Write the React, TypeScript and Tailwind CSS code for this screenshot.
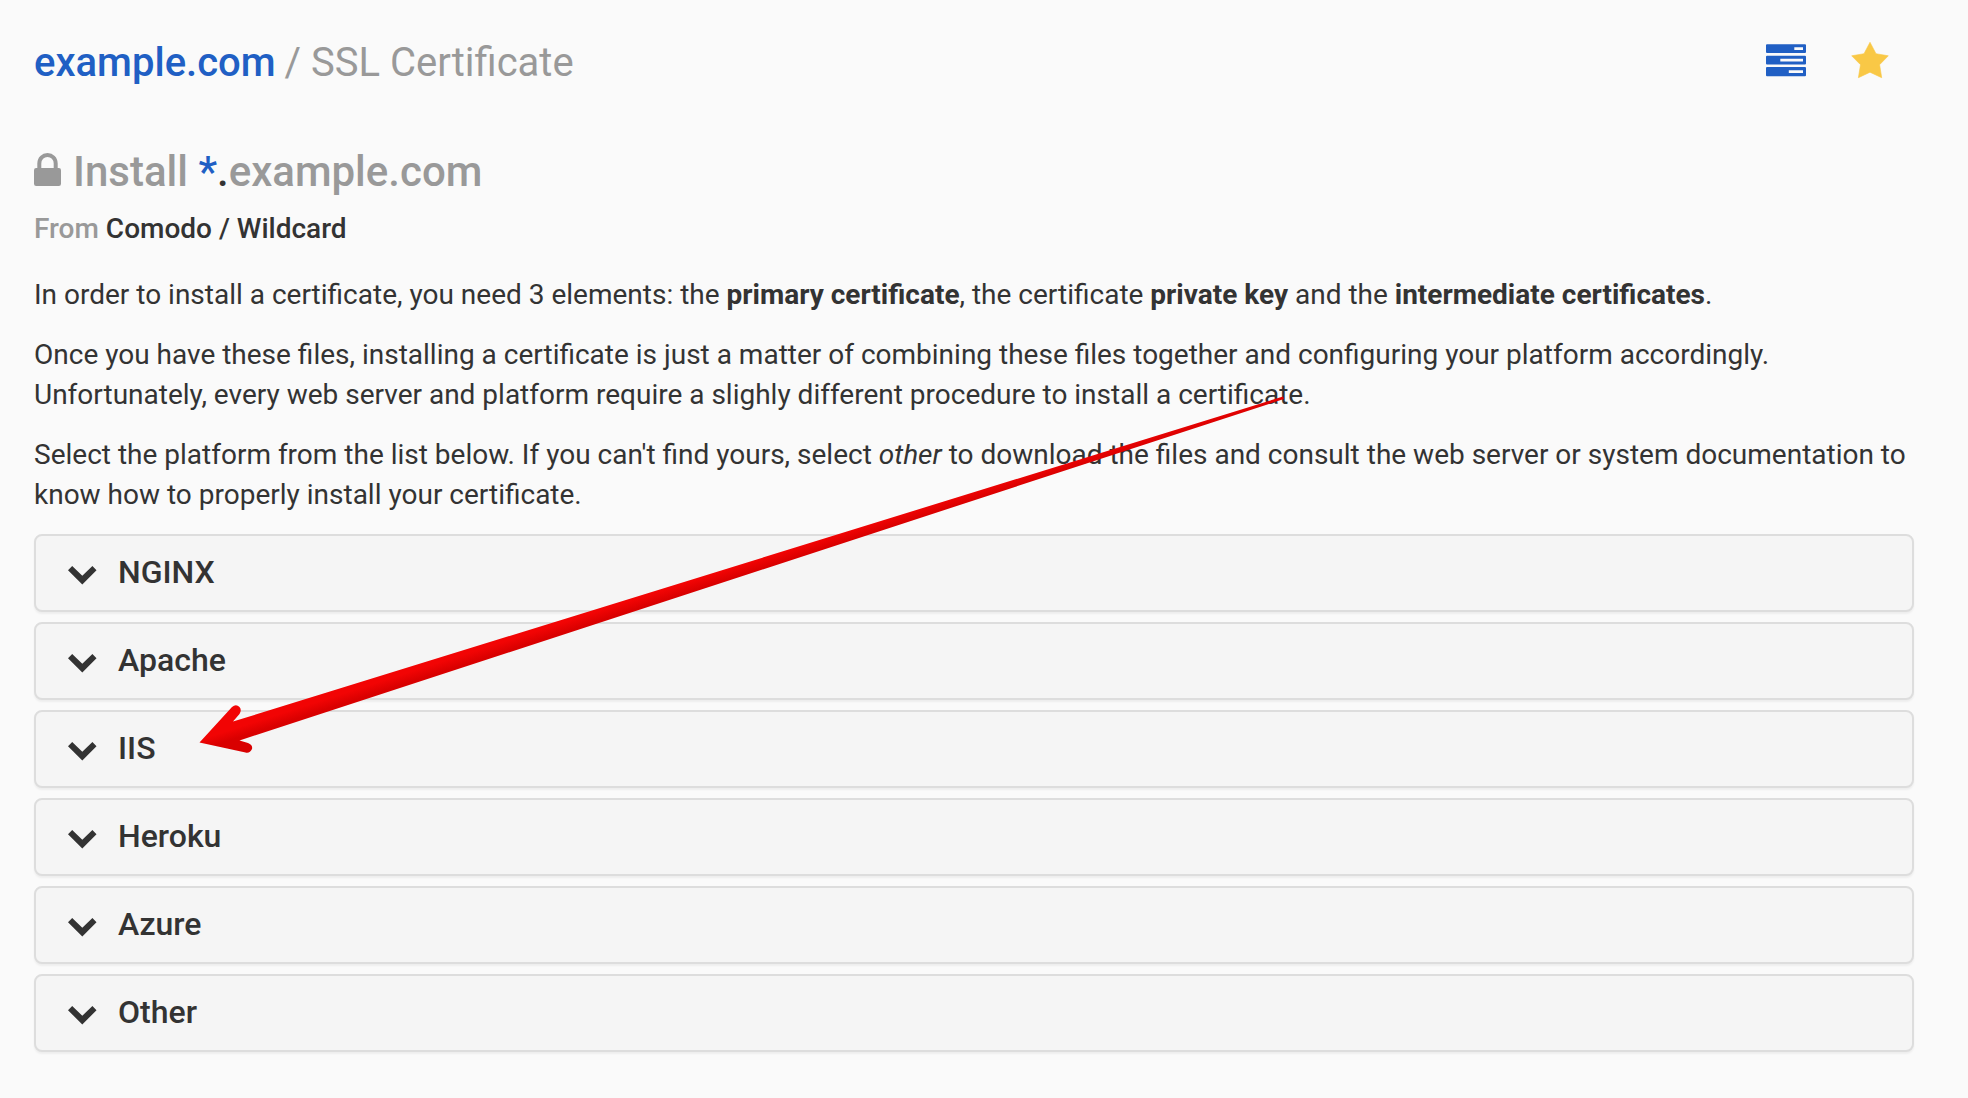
const platforms = ["NGINX", "Apache", "IIS", "Heroku", "Azure", "Other"];

function ServersIcon() {
  return (
    <svg className="block" width="40" height="33" viewBox="0 0 40 33" fill="#205fc4" fillRule="evenodd">
      <path d="M1 0.3H39Q40 0.3 40 1.3V8Q40 9 39 9H1Q0 9 0 8V1.3Q0 0.3 1 0.3ZM28.300 3.300V6H37V3.300Z" />
      <path d="M1 11.800H39Q40 11.800 40 12.800V19.600Q40 20.600 39 20.600H1Q0 20.600 0 19.600V12.800Q0 11.800 1 11.800ZM14.300 14.700V17.600H37V14.700Z" />
      <path d="M1 23.100H39Q40 23.100 40 24.100V31.200Q40 32.200 39 32.200H1Q0 32.200 0 31.200V24.100Q0 23.100 1 23.100ZM22.800 26.300V29.100H37V26.300Z" />
    </svg>
  );
}

function StarIcon() {
  return (
    <svg className="block" width="38" height="37" viewBox="0 0 38 37" fill="#f9c846" stroke="#f9c846" strokeWidth="0.6" strokeLinejoin="round">
      <path d="M19 0.3L25 11.700L37.300 13.800L28.600 22.700L30.700 35.700L19 30.200L7.400 35.700L9.500 22.700L0.700 13.800L13 11.700Z" />
    </svg>
  );
}

function LockIcon() {
  return (
    <svg className="block" width="27" height="33" viewBox="0 0 27 33">
      <path d="M5.3 16V10.500C5.300 5.300 9 2 13.500 2S21.700 5.300 21.700 10.500V16" fill="none" stroke="#999" strokeWidth="4" />
      <rect y="15" width="27" height="18" rx="2.2" fill="#999" />
    </svg>
  );
}

function ChevronIcon() {
  return (
    <svg className="block" width="29" height="19" viewBox="0 0 29 19" fill="#333">
      <path d="M4.200 0L14.300 9.800L24.400 0L28.500 4.200L14.300 18.500L0 4.200Z" />
    </svg>
  );
}

export default function App() {
  return (
    <div className="relative h-[1098px] w-[1968px] overflow-hidden bg-[#fafafa] pl-[34px] pr-[54px] font-['Roboto',sans-serif] text-[28px] leading-[40px] text-[#333]">
      <header className="flex h-[122px] items-start justify-between pr-[25px]">
        <h1 className="pt-[39px] text-[40px] leading-[48px] text-[#999]">
          <a className="mr-[-1px] font-medium text-[#205fc4]">example.com</a> / SSL Certificate
        </h1>
        <div className="flex gap-[45px] pt-[42px]">
          <div className="pt-[2px]"><ServersIcon /></div>
          <StarIcon />
        </div>
      </header>
      <h2 className="flex h-[87px] items-start pt-[25px] text-[42px] leading-[50px] font-medium text-[#999]">
        <span className="mr-[12px] pt-[6px]"><LockIcon /></span>
        <span>Install <span className="text-[#205fc4]">*</span><span className="text-[#333]">.</span>example.com</span>
      </h2>
      <h3 className="mb-[26px] font-medium"><span className="text-[#999]">From</span> Comodo / Wildcard</h3>
      <div className="flex flex-col gap-5 whitespace-nowrap">
        <p>
          In order to install a certificate, you need 3 elements: the <strong>primary certificate</strong>, the certificate <strong>private key</strong> and the <strong>intermediate certificates</strong>.
        </p>
        <p>
          Once you have these files, installing a certificate is just a matter of combining these files together and configuring your platform accordingly.<br />
          Unfortunately, every web server and platform require a slighly different procedure to install a certificate.
        </p>
        <p>
          Select the platform from the list below. If you can't find yours, select <em>other</em> to download the files and consult the web server or system documentation to<br />
          know how to properly install your certificate.
        </p>
      </div>
      <ul className="mt-[19px] flex flex-col gap-[10px]">
        {platforms.map((name) => (
          <li key={name} className="flex h-[78px] items-center rounded-lg border-2 border-[#ddd] bg-[#f5f5f5] pl-8 text-[32px] font-medium shadow-[0_2px_2px_rgba(0,0,0,0.05)]">
            <span className="mr-[21px] pt-[4px]"><ChevronIcon /></span>
            <span className="pb-[2px]">{name}</span>
          </li>
        ))}
      </ul>
      <svg className="pointer-events-none absolute left-[190px] top-[390px]" width="1100" height="370" viewBox="190 390 1100 370">
        <defs>
          <linearGradient id="shaft" gradientUnits="userSpaceOnUse" x1="735.5" y1="563.5" x2="740.5" y2="579">
            <stop offset="0.2" stopColor="#f20404" />
            <stop offset="0.8" stopColor="#d90000" />
          </linearGradient>
        </defs>
        <path d="M199.5 742.5L232 707Q236 703.500 239.500 707Q242 710 239.500 714L233 721.500L1283 396.500L1284 399L239.500 740.500L248 743Q253 745 252 749Q250 753.500 245.500 752.500Z" fill="url(#shaft)" />
      </svg>
    </div>
  );
}
